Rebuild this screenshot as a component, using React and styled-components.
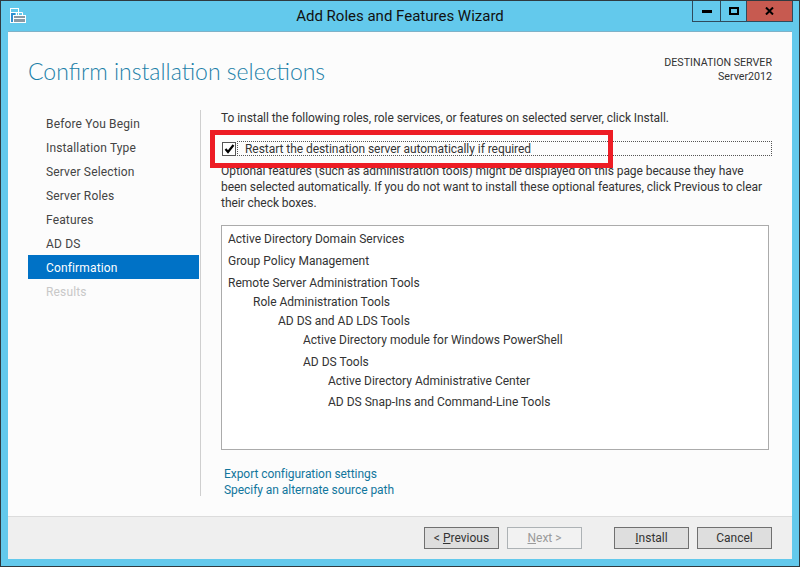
import React from "react";
import styled, { createGlobalStyle } from "styled-components";

const Global = createGlobalStyle`
  html, body {
    margin: 0;
    padding: 0;
    background: #63c9ec;
  }
  * {
    box-sizing: border-box;
  }
`;

const Window = styled.div`
  position: relative;
  width: 800px;
  height: 567px;
  display: flex;
  flex-direction: column;
  background: #63c9ec;
  border: 1px solid #2f3a40;
  padding: 0 7px 7px;
  font-family: "Roboto", "Noto Sans", sans-serif;
  font-size: 12px;
  line-height: 16px;
  color: #333;
`;

const TitleBar = styled.div`
  position: relative;
  height: 30px;
  flex: none;
  display: flex;
  align-items: center;
  justify-content: center;
  font-size: 15px;
  color: #111;
`;

const AppIcon = styled.svg`
  position: absolute;
  left: 2px;
  top: 6px;
`;

const Caption = styled.div`
  position: absolute;
  right: -1px;
  top: 0;
  height: 21px;
  display: flex;
  border: 1px solid #2f4a5c;
  border-top: none;
`;

const CaptionButton = styled.div`
  width: ${(p) => p.$w}px;
  display: flex;
  align-items: center;
  justify-content: center;
  background: ${(p) => (p.$close ? "#c75a50" : "transparent")};
  & + & {
    border-left: 1px solid #2f4a5c;
  }
`;

const Client = styled.div`
  flex: 1;
  display: flex;
  flex-direction: column;
  background: #fcfcfc;
  border-top: 1px solid #7fb2c8;
  min-height: 0;
`;

const Header = styled.div`
  height: 78px;
  flex: none;
  display: flex;
  justify-content: space-between;
  padding: 22px 20px 0 20px;
`;

const PageTitle = styled.h1`
  margin: 0;
  font-family: "Lato", "Open Sans", sans-serif;
  font-weight: 300;
  font-size: 23px;
  line-height: 34px;
  color: #1b80a8;
`;

const ServerInfo = styled.div`
  text-align: right;
  font-size: 10.67px;
  line-height: 14px;
  margin-top: 2px;
  color: #333;
`;

const Body = styled.div`
  flex: 1;
  display: flex;
  padding: 0 0 20px 20px;
  min-height: 0;
`;

const Nav = styled.nav`
  width: 171px;
  flex: none;
  margin-right: 1px;
  padding-top: 1px;
`;

const NavItem = styled.div`
  height: 24px;
  padding: 2px 0 0 18px;
  display: flex;
  align-items: center;
  letter-spacing: 0.15px;
  background: ${(p) => (p.$active ? "#0072c6" : "transparent")};
  color: ${(p) => (p.$active ? "#fff" : p.$disabled ? "#c8c8c8" : "#444")};
`;

const Content = styled.div`
  flex: 1;
  border-left: 1px solid #cfcfcf;
  padding-left: 20px;
  padding-right: 20px;
`;

const Intro = styled.p`
  margin: 0;
  letter-spacing: -0.06px;
`;

const CheckRow = styled.div`
  display: flex;
  align-items: center;
  margin-top: 15px;
  height: 15px;
`;

const Check = styled.div`
  width: 14px;
  height: 14px;
  margin: 0 1px;
  flex: none;
  background: #fff;
  border: 1px solid #555;
  display: flex;
  align-items: center;
  justify-content: center;
`;

const FocusLabel = styled.div`
  flex: 1;
  height: 15px;
  display: flex;
  align-items: center;
  padding-left: 7px;
  border: 1px dotted #555;
  letter-spacing: -0.05px;
  color: #333;
`;

const Note = styled.p`
  margin: 7px 0 0;
  white-space: nowrap;
  letter-spacing: -0.05px;
`;

const ListBox = styled.div`
  width: 548px;
  height: 225px;
  margin-top: 14px;
  padding: 5px 6px;
  background: #fff;
  border: 1px solid #ababab;
`;

const ListRow = styled.div`
  margin-top: ${(p) => p.$top}px;
  padding-left: ${(p) => p.$level * 25}px;
`;

const Links = styled.div`
  margin-top: 16px;
  padding-left: 3px;
  letter-spacing: -0.05px;
`;

const Link = styled.div`
  color: #12769c;
`;

const Footer = styled.div`
  height: 43px;
  flex: none;
  display: flex;
  align-items: flex-start;
  justify-content: flex-end;
  padding: 10px 20px 0 0;
  background: #efefef;
  border-top: 1px solid #dcdcdc;
`;

const Button = styled.div`
  width: 75px;
  height: 22px;
  margin-left: ${(p) => p.$left}px;
  display: flex;
  align-items: center;
  justify-content: center;
  background: ${(p) => (p.$disabled ? "#f2f2f2" : "#dedede")};
  border: 1px solid ${(p) => (p.$disabled ? "#adb2b5" : "#707070")};
  color: ${(p) => (p.$disabled ? "#9a9a9a" : "#333")};
  white-space: pre;
  u {
    text-underline-offset: 1px;
  }
`;

const Highlight = styled.div`
  position: absolute;
  left: 209px;
  top: 129px;
  width: 403px;
  height: 38px;
  border: 5px solid #ed1c24;
`;

const steps = [
  "Before You Begin",
  "Installation Type",
  "Server Selection",
  "Server Roles",
  "Features",
  "AD DS",
  "Confirmation",
  "Results",
];

const rows = [
  { label: "Active Directory Domain Services", level: 0, top: 0 },
  { label: "Group Policy Management", level: 0, top: 6 },
  { label: "Remote Server Administration Tools", level: 0, top: 6 },
  { label: "Role Administration Tools", level: 1, top: 3 },
  { label: "AD DS and AD LDS Tools", level: 2, top: 3 },
  { label: "Active Directory module for Windows PowerShell", level: 3, top: 3 },
  { label: "AD DS Tools", level: 3, top: 6 },
  { label: "Active Directory Administrative Center", level: 4, top: 3 },
  { label: "AD DS Snap-Ins and Command-Line Tools", level: 4, top: 5 },
];

export default function App() {
  return (
    <>
      <Global />
      <Window>
        <TitleBar>
          <AppIcon width="18" height="18" viewBox="0 0 18 18">
            <rect x="0.5" y="1.5" width="8" height="14" fill="#63c9ec" stroke="#fff" />
            <rect x="1" y="5" width="7" height="1" fill="#fff" />
            <rect x="1" y="6" width="4" height="9" fill="#2f8fd0" />
            <rect x="3.5" y="8.5" width="12" height="7" fill="#8a9aa5" stroke="#fff" />
            <path d="M6.5 8V5.5h6V8" fill="none" stroke="#fff" />
            <rect x="4" y="11" width="11" height="1" fill="#fff" />
          </AppIcon>
          Add Roles and Features Wizard
          <Caption>
            <CaptionButton $w={27}>
              <svg width="10" height="3" viewBox="0 0 10 3">
                <rect width="10" height="3" fill="#000" />
              </svg>
            </CaptionButton>
            <CaptionButton $w={26}>
              <svg width="10" height="8" viewBox="0 0 10 8">
                <rect x="1" y="1" width="8" height="6" fill="none" stroke="#000" strokeWidth="2" />
              </svg>
            </CaptionButton>
            <CaptionButton $w={46} $close>
              <svg width="9" height="8" viewBox="0 0 9 8">
                <path d="M1 0.5L8 7.5M8 0.5L1 7.5" stroke="#000" strokeWidth="2" />
              </svg>
            </CaptionButton>
          </Caption>
        </TitleBar>
        <Client>
          <Header>
            <PageTitle>Confirm installation selections</PageTitle>
            <ServerInfo>
              DESTINATION SERVER
              <br />
              Server2012
            </ServerInfo>
          </Header>
          <Body>
            <Nav>
              {steps.map((step) => (
                <NavItem
                  key={step}
                  $active={step === "Confirmation"}
                  $disabled={step === "Results"}
                >
                  {step}
                </NavItem>
              ))}
            </Nav>
            <Content>
              <Intro>
                To install the following roles, role services, or features on selected server, click Install.
              </Intro>
              <CheckRow>
                <Check>
                  <svg width="11" height="10" viewBox="0 0 11 10">
                    <path d="M1.5 5L4 8L9.5 1" fill="none" stroke="#000" strokeWidth="2.2" />
                  </svg>
                </Check>
                <FocusLabel>Restart the destination server automatically if required</FocusLabel>
              </CheckRow>
              <Note>
                Optional features (such as administration tools) might be displayed on this page because they have
                <br />
                been selected automatically. If you do not want to install these optional features, click Previous to clear
                <br />
                their check boxes.
              </Note>
              <ListBox>
                {rows.map((row) => (
                  <ListRow key={row.label} $level={row.level} $top={row.top}>
                    {row.label}
                  </ListRow>
                ))}
              </ListBox>
              <Links>
                <Link>Export configuration settings</Link>
                <Link>Specify an alternate source path</Link>
              </Links>
            </Content>
          </Body>
          <Footer>
            <Button>
              {"< "}
              <u>P</u>revious
            </Button>
            <Button $disabled $left={8}>
              <u>N</u>ext {">"}
            </Button>
            <Button $left={32}>
              <u>I</u>nstall
            </Button>
            <Button $left={8}>Cancel</Button>
          </Footer>
        </Client>
        <Highlight />
      </Window>
    </>
  );
}
